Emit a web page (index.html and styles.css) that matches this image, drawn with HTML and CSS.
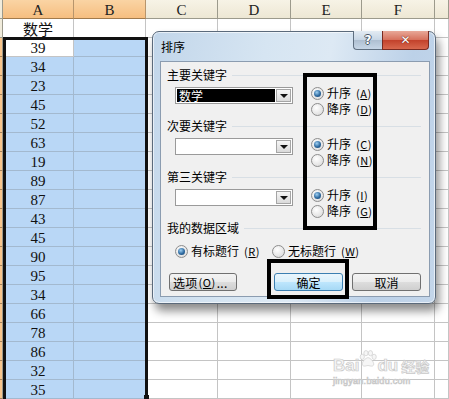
FILE: index.html
```html
<!DOCTYPE html>
<html>
<head>
<meta charset="utf-8">
<link rel="stylesheet" href="styles.css">
</head>
<body>
<div class="page">
  <div class="sheet">
    <div class="rh hdr"></div><div class="ch hot">A</div><div class="ch hot">B</div><div class="ch">C</div><div class="ch">D</div><div class="ch">E</div><div class="ch">F</div><div class="ch"></div>

    <div class="rh"></div><div class="c t">数学</div><div class="c"></div><div class="c"></div><div class="c"></div><div class="c"></div><div class="c"></div><div class="c"></div>
    <div class="rh on"></div><div class="c n act">39</div><div class="c s"></div><div class="c"></div><div class="c"></div><div class="c"></div><div class="c"></div><div class="c"></div>
    <div class="rh on"></div><div class="c n s">34</div><div class="c s"></div><div class="c"></div><div class="c"></div><div class="c"></div><div class="c"></div><div class="c"></div>
    <div class="rh on"></div><div class="c n s">23</div><div class="c s"></div><div class="c"></div><div class="c"></div><div class="c"></div><div class="c"></div><div class="c"></div>
    <div class="rh on"></div><div class="c n s">45</div><div class="c s"></div><div class="c"></div><div class="c"></div><div class="c"></div><div class="c"></div><div class="c"></div>
    <div class="rh on"></div><div class="c n s">52</div><div class="c s"></div><div class="c"></div><div class="c"></div><div class="c"></div><div class="c"></div><div class="c"></div>
    <div class="rh on"></div><div class="c n s">63</div><div class="c s"></div><div class="c"></div><div class="c"></div><div class="c"></div><div class="c"></div><div class="c"></div>
    <div class="rh on"></div><div class="c n s">19</div><div class="c s"></div><div class="c"></div><div class="c"></div><div class="c"></div><div class="c"></div><div class="c"></div>
    <div class="rh on"></div><div class="c n s">89</div><div class="c s"></div><div class="c"></div><div class="c"></div><div class="c"></div><div class="c"></div><div class="c"></div>
    <div class="rh on"></div><div class="c n s">87</div><div class="c s"></div><div class="c"></div><div class="c"></div><div class="c"></div><div class="c"></div><div class="c"></div>
    <div class="rh on"></div><div class="c n s">43</div><div class="c s"></div><div class="c"></div><div class="c"></div><div class="c"></div><div class="c"></div><div class="c"></div>
    <div class="rh on"></div><div class="c n s">45</div><div class="c s"></div><div class="c"></div><div class="c"></div><div class="c"></div><div class="c"></div><div class="c"></div>
    <div class="rh on"></div><div class="c n s">90</div><div class="c s"></div><div class="c"></div><div class="c"></div><div class="c"></div><div class="c"></div><div class="c"></div>
    <div class="rh on"></div><div class="c n s">95</div><div class="c s"></div><div class="c"></div><div class="c"></div><div class="c"></div><div class="c"></div><div class="c"></div>
    <div class="rh on"></div><div class="c n s">34</div><div class="c s"></div><div class="c"></div><div class="c"></div><div class="c"></div><div class="c"></div><div class="c"></div>
    <div class="rh on"></div><div class="c n s">66</div><div class="c s"></div><div class="c"></div><div class="c"></div><div class="c"></div><div class="c"></div><div class="c"></div>
    <div class="rh on"></div><div class="c n s">78</div><div class="c s"></div><div class="c"></div><div class="c"></div><div class="c"></div><div class="c"></div><div class="c"></div>
    <div class="rh on"></div><div class="c n s">86</div><div class="c s"></div><div class="c"></div><div class="c"></div><div class="c"></div><div class="c"></div><div class="c"></div>
    <div class="rh on"></div><div class="c n s">32</div><div class="c s"></div><div class="c"></div><div class="c"></div><div class="c"></div><div class="c"></div><div class="c"></div>
    <div class="rh on"></div><div class="c n s">35</div><div class="c s"></div><div class="c"></div><div class="c"></div><div class="c"></div><div class="c"></div><div class="c"></div>
  </div>
  <div class="selection"><span class="handle"></span></div>

  <div class="dialog">
    <div class="titlebar">
      <span class="title">排序</span>
      <span class="tbtns"><span class="tb help">?</span><span class="tb close">✕</span></span>
    </div>
    <div class="panel">
      <div class="group">
        <div class="legend">主要关键字</div>
        <div class="grow">
          <div class="combo"><span class="val sel">数学</span><span class="drop"><i></i></span></div>
          <div class="radios">
            <label class="opt"><span class="radio on"></span>升序<span class="key">(<u>A</u>)</span></label>
            <label class="opt"><span class="radio"></span>降序<span class="key">(<u>D</u>)</span></label>
          </div>
        </div>
      </div>
      <div class="group">
        <div class="legend">次要关键字</div>
        <div class="grow">
          <div class="combo"><span class="val"></span><span class="drop"><i></i></span></div>
          <div class="radios">
            <label class="opt"><span class="radio on"></span>升序<span class="key">(<u>C</u>)</span></label>
            <label class="opt"><span class="radio"></span>降序<span class="key">(<u>N</u>)</span></label>
          </div>
        </div>
      </div>
      <div class="group">
        <div class="legend">第三关键字</div>
        <div class="grow">
          <div class="combo"><span class="val"></span><span class="drop"><i></i></span></div>
          <div class="radios">
            <label class="opt"><span class="radio on"></span>升序<span class="key">(<u>I</u>)</span></label>
            <label class="opt"><span class="radio"></span>降序<span class="key">(<u>G</u>)</span></label>
          </div>
        </div>
      </div>
      <div class="legend">我的数据区域</div>
      <div class="datarow">
        <label class="opt"><span class="radio on"></span>有标题行<span class="key">(<u>R</u>)</span></label>
        <label class="opt second"><span class="radio"></span>无标题行<span class="key">(<u>W</u>)</span></label>
      </div>
      <div class="buttons">
        <span class="btn opts">选项<span class="key">(<u>O</u>)</span>...</span>
        <span class="btn ok">确定</span>
        <span class="btn cancel">取消</span>
      </div>
      <div class="mark mark-radios"></div>
      <div class="mark mark-ok"></div>
    </div>
  </div>

  <div class="watermark">
    <div class="wm-logo">Bai<svg class="paw" width="18" height="17" viewBox="0 0 22 20"><g fill="#f6f6f6" stroke="#cfcfcf" stroke-width="0.9"><ellipse cx="4" cy="8" rx="2.6" ry="3.2"/><ellipse cx="8.5" cy="3.5" rx="2.6" ry="3.2"/><ellipse cx="14" cy="3.5" rx="2.6" ry="3.2"/><ellipse cx="18.5" cy="8" rx="2.6" ry="3.2"/><path d="M11 9c-3 0-7 5-7 8 0 2 2 2.6 4 2.2 1.5-.3 2-.6 3-.6s1.5.3 3 .6c2 .4 4-.2 4-2.2 0-3-4-8-7-8z"/></g></svg>du<span class="wm-cn">经验</span></div>
    <div class="wm-url">jingyan.baidu.com</div>
  </div>
</div>
</body>
</html>
```

FILE: styles.css
```css
* { box-sizing: border-box; }
html, body { margin: 0; padding: 0; }
body { width: 449px; height: 399px; overflow: hidden; background: #fff; }
.page { position: relative; width: 449px; height: 399px; overflow: hidden; }

.sheet {
  display: grid;
  grid-template-columns: 3px 71px 72px 72px 73px 71px 73px 14px;
  grid-template-rows: repeat(21, 19px);
  font-family: "Liberation Serif", serif;
}
.rh { background: #f1ecdc; border-right: 1px solid #9c9a8c; border-bottom: 1px solid #9c9a8c; }
.rh.on { background: #f8c58c; border-bottom-color: #a4825a; }
.rh.hdr { background: #f1ecdc; }
.ch {
  background: linear-gradient(#f7f3e6, #ede7d4);
  border-right: 1px solid #9c9a8c;
  border-bottom: 1px solid #9c9a8c;
  display: flex; align-items: center; justify-content: center;
  font-size: 15px; color: #222; padding-top: 2px;
}
.ch.hot { background: linear-gradient(#fad4a4, #f6be80); border-right-color: #b7956c; border-bottom-color: #a17a4c; }
.c {
  border-right: 1px solid #c4c4c4;
  border-bottom: 1px solid #c4c4c4;
  display: flex; align-items: center; justify-content: center;
  font-size: 15px; color: #111;
}
.c.t { font-family: "Noto Sans CJK SC", sans-serif; font-size: 15px; padding-top: 1px; }
.c.s { background: #b9d7f6; border-right-color: #a3b9cf; border-bottom-color: #a3b9cf; }
.c.act { background: #fff; }
.c.n { padding-top: 2px; }

.selection {
  position: absolute; left: 3px; top: 37px; width: 145px; height: 362px;
  border: 3px solid #111;
  border-bottom: none;
  z-index: 1;
}
.handle { position: absolute; right: -4px; bottom: 0; width: 5px; height: 4px; background: #111; }

/* dialog */
.dialog {
  position: absolute; left: 152px; top: 31px; width: 284px; height: 273px;
  border: 1px solid #5b6a7b; border-radius: 7px;
  background: linear-gradient(100deg, #c2d6ea 0%, #d6e5f2 35%, #dde9f4 55%, #bcd1e8 80%, #c4d6ea 100%);
  box-shadow: 3px 7px 10px rgba(0,0,0,0.45), inset 0 0 0 1px rgba(255,255,255,0.6);
  font-family: "Noto Sans CJK SC", sans-serif;
  font-size: 12px; color: #000;
  z-index: 2;
}
.titlebar { height: 29px; display: flex; justify-content: space-between; align-items: flex-start; }
.title { margin: 7px 0 0 8px; font-size: 12px; line-height: 16px; }
.tbtns { display: flex; margin-right: 6px; margin-top: -1px; }
.tb {
  height: 19px; display: flex; align-items: center; justify-content: center;
  color: #fff; font-family: "DejaVu Sans", sans-serif; font-weight: bold;
  border: 1px solid #5f6f80; border-top: none;
}
.tb.help {
  width: 29px; border-radius: 0 0 0 4px; border-right: none;
  background: linear-gradient(#e3ebf3, #c7d6e5 50%, #aebfd1 51%, #c6d6e6);
  font-size: 12px; color: #fff;
  text-shadow: 1px 0 #4a5868, -1px 0 #4a5868, 0 1px #4a5868, 0 -1px #4a5868;
}
.tb.close {
  width: 47px; border-radius: 0 0 4px 0; border-color: #7a2a20;
  background: linear-gradient(#e8a898, #d6705c 50%, #c2412b 51%, #d8684e);
  font-size: 12px; text-shadow: 0 0 1px #6a1b10, 0 0 1px #6a1b10;
}

.panel {
  position: relative;
  margin: 0 5px 0 7px;
  height: 236px;
  background: #f0f0f0;
  border: 1px solid #8b9cb0;
  padding: 3px 0 0 0;
}
.group { height: 51px; }
.legend { display: flex; align-items: center; height: 20px; padding-left: 6px; line-height: 20px; }
.legend::after { content: ""; flex: 1; height: 1px; background: #d8dfe5; margin: 1px 8px 0 5px; }
.grow { display: flex; align-items: flex-start; }
.combo {
  margin: 2px 0 0 14px; width: 118px; height: 17px;
  display: flex; background: #fff; border: 1px solid #9a9a9a;
}
.val { flex: 1; margin: 1px; line-height: 13px; padding-left: 2px; }
.val.sel { background: #000; color: #fff; }
.drop {
  width: 15px; margin: 1px 1px 1px 0;
  background: linear-gradient(#f6f6f6, #dadada);
  border: 1px solid #a5a5a5;
  display: flex; align-items: center; justify-content: center;
}
.drop i { width: 0; height: 0; border-left: 4px solid transparent; border-right: 4px solid transparent; border-top: 4px solid #111; margin-top: 1px; }
.radios { margin-left: 18px; display: flex; flex-direction: column; }
.opt { display: flex; align-items: center; height: 16px; line-height: 16px; gap: 3px; }
.key { margin-left: 2px; font-size: 11px; letter-spacing: 0.5px; }
.opt u { text-decoration: underline; }
.radio {
  width: 13px; height: 13px; border-radius: 50%;
  border: 1px solid #8d8d8d;
  background: radial-gradient(circle at 40% 35%, #ffffff, #e2e2e2 70%, #cfcfcf);
  display: flex; align-items: center; justify-content: center;
}
.radio.on::after {
  content: ""; width: 7px; height: 7px; border-radius: 50%;
  background: radial-gradient(circle at 40% 35%, #9fd0f2, #2e6aa0 55%, #153f6a);
}
.datarow { display: flex; margin: 5px 0 0 14px; }
.datarow .second { margin-left: 12px; }
.buttons { display: flex; margin: 14px 0 0 8px; }
.btn {
  height: 18px; display: flex; align-items: center; justify-content: center;
  border: 1px solid #707070; border-radius: 3px;
  background: linear-gradient(#f3f3f3 0%, #ebebeb 50%, #dddddd 51%, #cfcfcf 100%);
}
.btn.opts { width: 68px; justify-content: flex-start; padding-left: 3px; letter-spacing: 0.3px; white-space: nowrap; }
.btn.opts .key { margin-left: 1px; margin-right: 1px; }
.btn.ok { width: 69px; margin-left: 37px; border-color: #3c7fb1; background: linear-gradient(#eaf6fd 0%, #d9f0fc 50%, #bee6fd 51%, #a7d9f5 100%); }
.btn.cancel { width: 69px; margin-left: 9px; }

.mark { position: absolute; border: 4px solid #000; pointer-events: none; }
.mark-radios { left: 142px; top: 11px; width: 74px; height: 157px; }
.mark-ok { left: 106px; top: 197px; width: 82px; height: 40px; }

.watermark {
  position: absolute; left: 333px; top: 347px; z-index: 3;
  color: #f5f5f5;
  -webkit-text-stroke: 0.7px #c9c9c9;
  font-family: "Liberation Sans", sans-serif;
}
.wm-logo { display: flex; align-items: flex-end; font-size: 17px; font-weight: bold; line-height: 18px; height: 28px; }
.paw { margin: 0 0 8px 0; }
.wm-cn { font-family: "Noto Sans CJK SC", sans-serif; font-size: 14px; line-height: 18px; margin-left: 3px; font-weight: bold; }
.wm-url { font-size: 9px; line-height: 11px; margin-top: 1px; letter-spacing: 0.3px; }
```
